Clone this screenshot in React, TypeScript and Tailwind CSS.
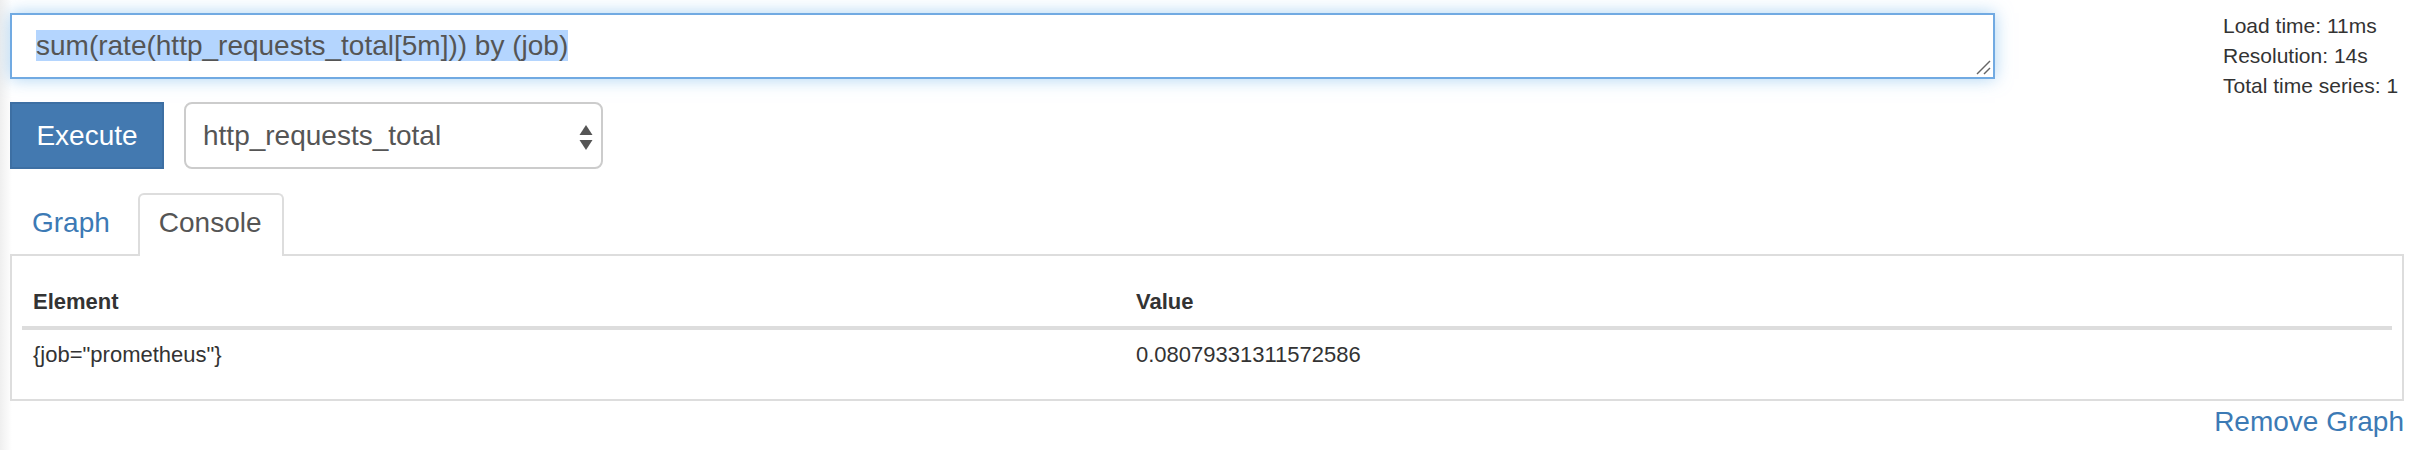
import React from "react";

export default function App() {
  return (
    <div className="w-[2424px] h-[450px] bg-[linear-gradient(to_right,#efefef,#ffffff_12px)] overflow-hidden font-['Liberation_Sans',Arial,sans-serif] pl-[10px] pr-[20px]">
      {/* Row 1: expression + stats */}
      <div className="flex items-start">
        <div className="relative mt-[13px] w-[1985px] h-[66px] border-2 border-[#71aae2] bg-white shadow-[0_0_16px_rgba(102,175,233,0.55)] px-[24px] py-[15px] text-[28px] leading-[32px] text-[#555]">
          <span className="bg-[#b4d5fe]">sum(rate(http_requests_total[5m])) by (job)</span>
          <svg className="absolute right-[1px] bottom-[1px]" width="18" height="18" viewBox="0 0 18 18">
            <line x1="3" y1="16" x2="16" y2="3" stroke="#666" strokeWidth="1.5" />
            <line x1="10" y1="16" x2="16" y2="10" stroke="#666" strokeWidth="1.5" />
          </svg>
        </div>
        <div className="ml-[228px] pt-[11px] text-[21px] leading-[30px] text-[#333] whitespace-nowrap">
          <div>Load time: 11ms</div>
          <div>Resolution: 14s</div>
          <div>Total time series: 1</div>
        </div>
      </div>

      {/* Row 2: execute + select */}
      <div className="flex items-center gap-[20px] mt-[1px]">
        <button className="w-[154px] h-[67px] bg-[#4379b0] border-2 border-[#3d6fa3] text-white text-[28px] leading-[32px] flex items-center justify-center">
          Execute
        </button>
        <div className="relative w-[419px] h-[67px] border-2 border-[#cccccc] rounded-[8px] bg-white flex items-center pl-[17px] text-[28px] leading-[32px] text-[#555]">
          http_requests_total
          <svg className="absolute right-[8px] top-[19px]" width="14" height="28" viewBox="0 0 14 28">
            <polygon points="7,2 13.5,12 0.5,12" fill="#555" />
            <polygon points="0.5,17 13.5,17 7,27" fill="#555" />
          </svg>
        </div>
      </div>

      {/* Tabs */}
      <div className="mt-[24px] flex items-end border-b-2 border-[#dddddd] text-[28px] leading-[32px]">
        <div className="-mb-[2px] border-2 border-b-0 border-transparent pl-[20px] pr-[20px] pt-[12px] pb-[17px] text-[#3c7ab5] mr-[6px]">
          Graph
        </div>
        <div className="-mb-[2px] border-2 border-b-0 border-[#dddddd] rounded-t-[6px] bg-white pl-[19px] pr-[20px] pt-[12px] pb-[17px] text-[#555]">
          Console
        </div>
      </div>

      {/* Panel */}
      <div className="bg-white border-2 border-t-0 border-[#dddddd] px-[10px] pt-[10px] pb-[19px] text-[22px] leading-[30px] text-[#333]">
        <div className="grid grid-cols-[1103px_1fr]">
          <div className="font-bold px-[11px] pt-[21px] pb-[9px] border-b-4 border-[#dddddd]">Element</div>
          <div className="font-bold px-[11px] pt-[21px] pb-[9px] border-b-4 border-[#dddddd]">Value</div>
          <div className="px-[11px] py-[10px]">{'{job="prometheus"}'}</div>
          <div className="px-[11px] py-[10px]">0.08079331311572586</div>
        </div>
      </div>

      {/* Remove graph */}
      <div className="mt-[1px] text-right text-[28px] leading-[40px] text-[#3c7ab5]">Remove Graph</div>
    </div>
  );
}
